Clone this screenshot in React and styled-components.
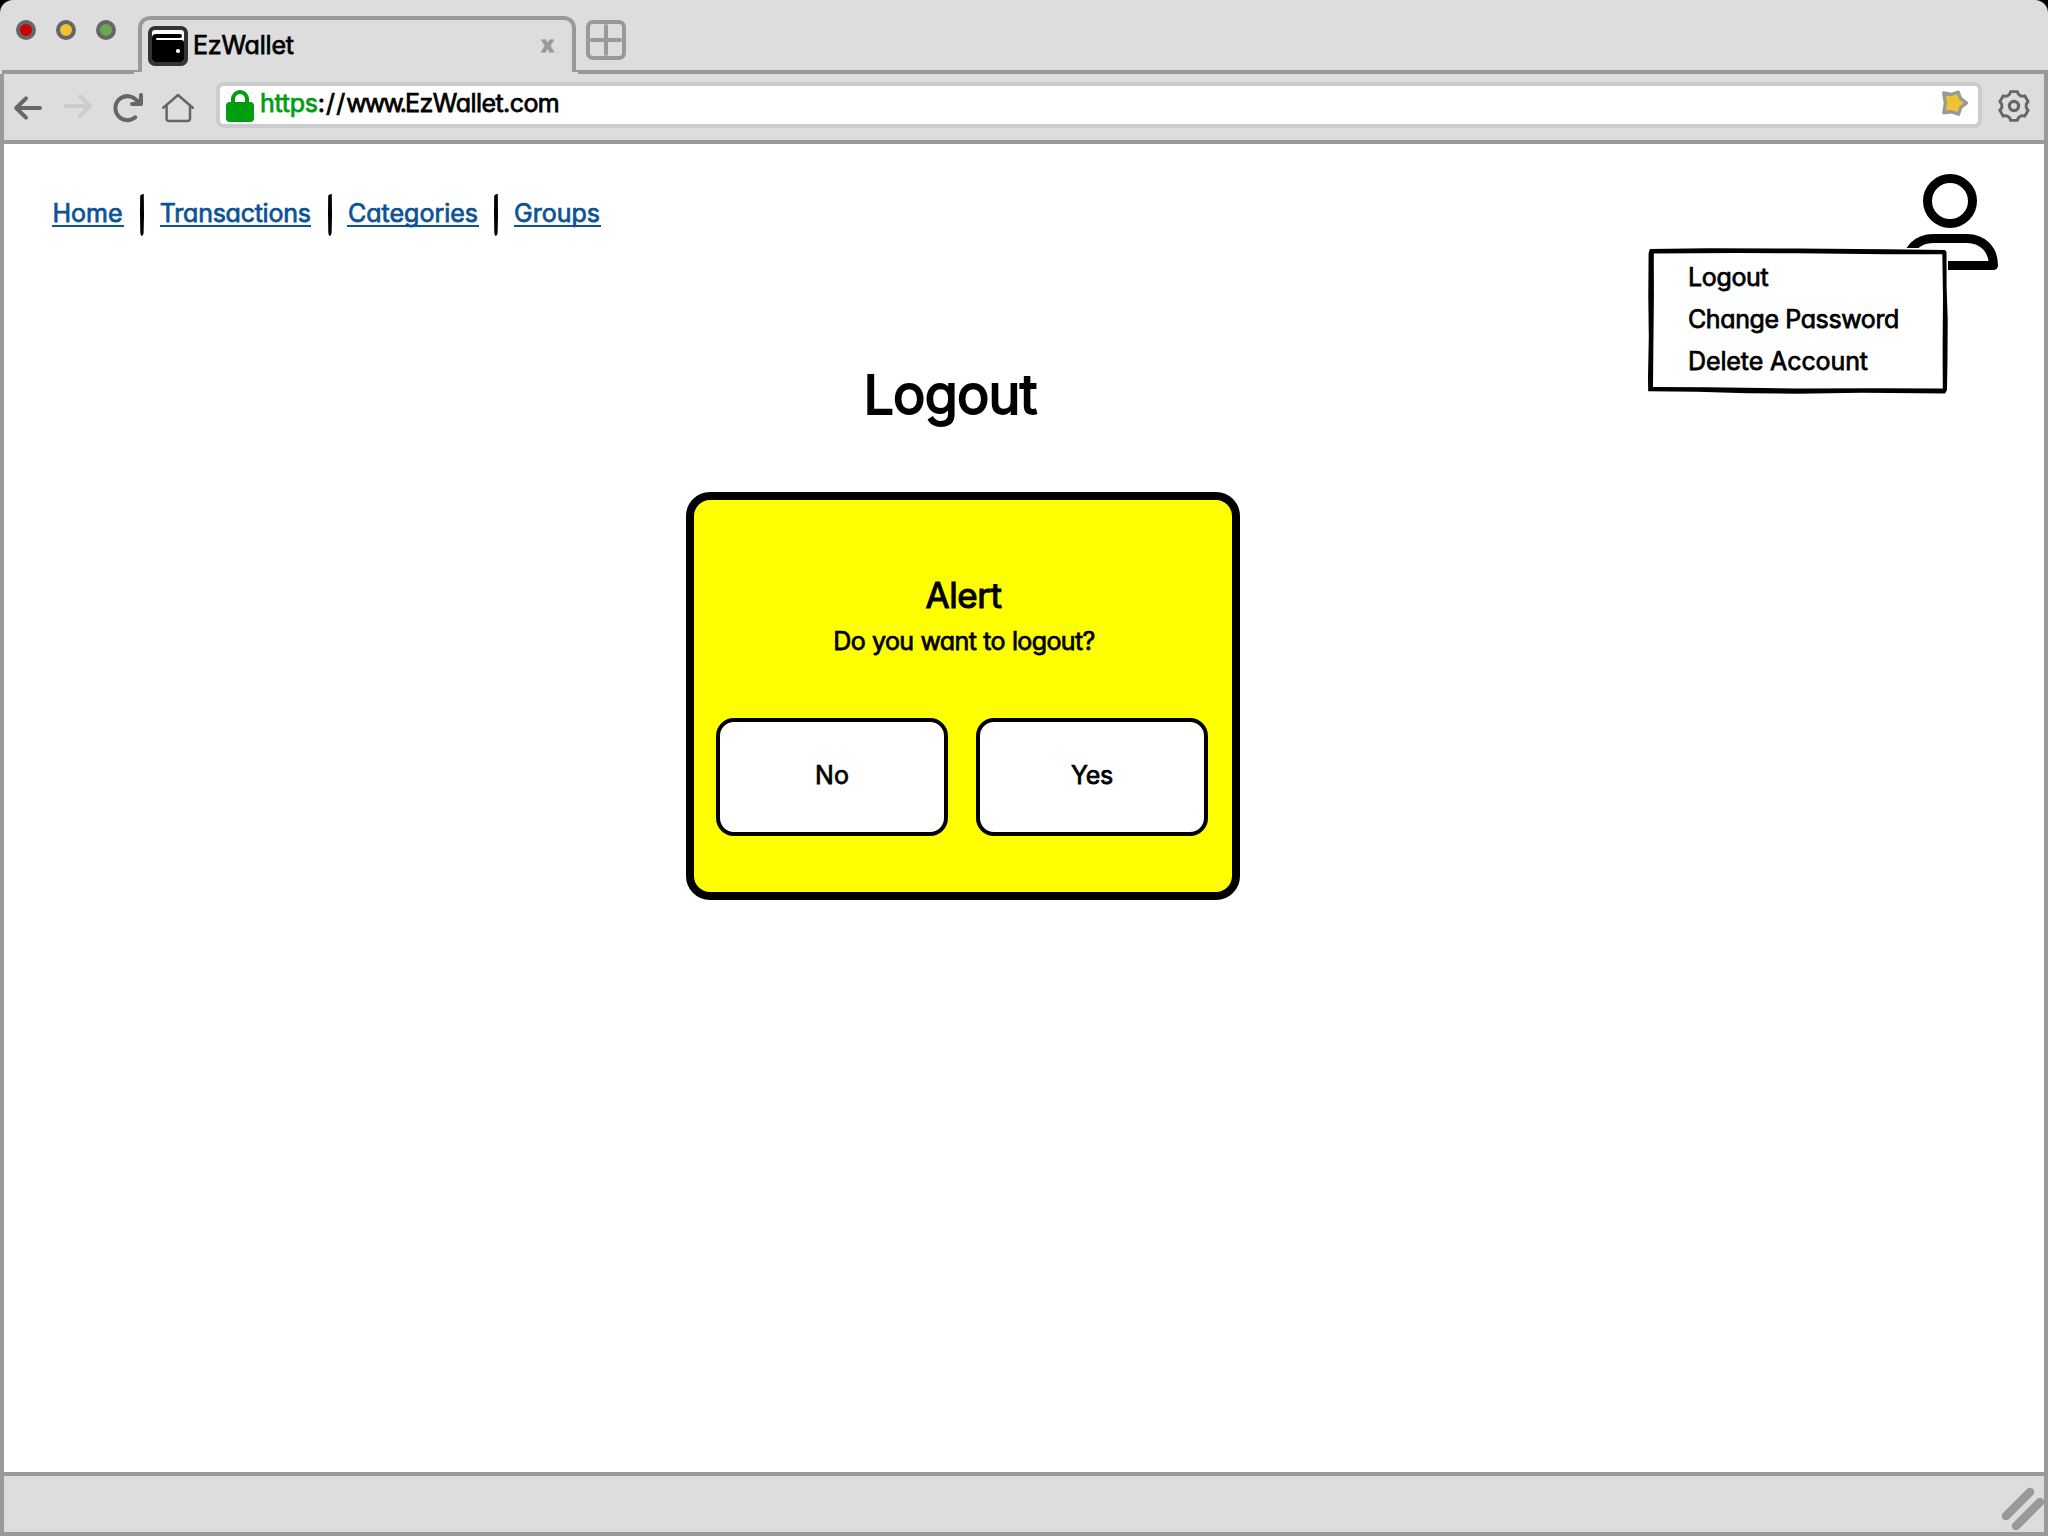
import React from "react";
import styled, { createGlobalStyle } from "styled-components";

const line = "#999999";
const chrome = "#dddddd";
const ink = "#666666";

const GlobalStyle = createGlobalStyle`
  * { box-sizing: border-box; }
  body { margin: 0; background: #000; }
`;

const Browser = styled.div`
  width: 2048px;
  height: 1536px;
  display: flex;
  flex-direction: column;
  overflow: hidden;
  background: ${chrome};
  border-radius: 13px 13px 0 0;
  font-family: Inter, "Liberation Sans", sans-serif;
  font-feature-settings: "cv11";
  font-size: 25px;
  font-weight: 400;
  color: #000;
`;

const Label = styled.span`
  display: block;
  white-space: nowrap;
  color: ${(p) => p.$color || "inherit"};
  letter-spacing: ${(p) => p.$track || 0}px;
  -webkit-text-stroke: ${(p) => p.$stroke || 0.75}px currentColor;
  stroke-linejoin: round;
`;

/* ---- tab strip ---- */

const TabStrip = styled.header`
  display: flex;
  height: 74px;
  flex: none;
`;

const WindowControls = styled.div`
  display: flex;
  gap: 20px;
  width: 132px;
  margin: 0 4px 0 2px;
  padding: 20px 0 0 14px;
  border-bottom: 4px solid ${line};
`;

const Dot = styled.i`
  width: 20px;
  height: 20px;
  border-radius: 50%;
  border: 4px solid ${ink};
  background: ${(p) => p.$color};
`;

const Tab = styled.div`
  position: relative;
  display: flex;
  width: 438px;
  height: 56px;
  margin-top: 16px;
  padding: 6px 18px 0 6px;
  border: 4px solid ${line};
  border-bottom: 0;
  border-radius: 12px 12px 0 0;
  line-height: 38px;
  &::before, &::after {
    content: "";
    position: absolute;
    bottom: 0;
    height: 2px;
    background: ${line};
  }
  &::before { left: -8px; width: 4px; }
  &::after { right: -6px; width: 2px; }
`;

const TabTitle = styled(Label)`
  flex: 1;
  margin-left: 5px;
`;

const CloseMark = styled.span`
  color: ${line};
  font-size: 22px;
  font-weight: 800;
  margin-top: -1px;
  -webkit-text-stroke: 0.8px currentColor;
`;

const StripRest = styled.div`
  flex: 1;
  margin-left: 2px;
  padding: 20px 0 0 8px;
  border-bottom: 4px solid ${line};
`;

/* ---- address toolbar ---- */

const Frame = styled.div`
  flex: 1;
  display: flex;
  flex-direction: column;
  border: 4px solid ${line};
  border-top: 0;
`;

const Toolbar = styled.div`
  display: flex;
  height: 70px;
  padding: 8px 12px 0 8px;
  border-bottom: 4px solid ${line};
`;

const Controls = styled.div`
  display: flex;
  gap: 18px;
  padding-top: 10px;
`;

const AddressBar = styled.div`
  display: flex;
  width: 1766px;
  height: 46px;
  margin-left: 22px;
  padding: 4px 10px 0 6px;
  border: 4px solid #cccccc;
  border-radius: 8px;
  background: #fff;
`;

const Address = styled.div`
  flex: 1;
  display: flex;
  margin-left: 6px;
  line-height: 27px;
`;

const Settings = styled.div`
  margin: 8px 0 0 14px;
`;

const Icon = styled.svg`
  display: block;
  flex: none;
  fill: none;
  stroke: ${ink};
  stroke-linecap: round;
  stroke-linejoin: round;
`;

/* ---- page ---- */

const Page = styled.div`
  flex: 1;
  background: #fff;
`;

const PageHeader = styled.div`
  display: flex;
  justify-content: space-between;
  height: 218px;
  padding: 30px 46px 0 47.5px;
`;

const Nav = styled.nav`
  display: flex;
  gap: 16px;
  padding-top: 20px;
`;

const NavLink = styled.a`
  display: flex;
  justify-content: center;
  width: ${(p) => p.$width}px;
  height: 27px;
  margin-top: 6px;
  line-height: 27px;
  color: #0b5394;
  border-bottom: 2px solid #0b5394;
`;

const Divider = styled.svg`
  display: block;
  width: 4px;
  height: 42px;
  margin: 0 ${(p) => p.$after || 0}px 0 ${(p) => p.$before || 0}px;
`;

const Account = styled.div`
  position: relative;
  width: 96px;
  height: 96px;
`;

const Menu = styled.div`
  position: absolute;
  top: 73px;
  right: 49px;
  width: 302px;
  height: 148px;
  padding: 9px 0 0 41px;
  line-height: 42px;
`;

const MenuFrame = styled.svg`
  position: absolute;
  left: 0;
  top: 0;
`;

const MenuItem = styled.div`
  position: relative;
`;

const Main = styled.main`
  padding-left: 682px;
`;

const Title = styled.h1`
  display: flex;
  justify-content: center;
  width: 528px;
  margin: 0 0 64px;
  font-size: 54px;
  font-weight: 400;
  line-height: 66px;
`;

const Alert = styled.section`
  display: flex;
  flex-direction: column;
  align-items: center;
  width: 554px;
  height: 408px;
  padding-top: 74px;
  border: 8px solid #000;
  border-radius: 24px;
  background: #ffff00;
`;

const AlertTitle = styled.h2`
  margin: 0 0 9px 1px;
  font-size: 35px;
  font-weight: 400;
  line-height: 42px;
`;

const Question = styled.div`
  margin-left: 2px;
  line-height: 32px;
  word-spacing: 0.5px;
`;

const Actions = styled.div`
  display: flex;
  gap: 28px;
  margin: 61px 2px 0 0;
`;

const Button = styled.button`
  display: flex;
  align-items: center;
  justify-content: center;
  width: 232px;
  height: 118px;
  padding: 0 0 5px;
  border: 4px solid #000;
  border-radius: 18px;
  background: #fff;
  color: #000;
  font: inherit;
  font-feature-settings: inherit;
`;

const StatusBar = styled.footer`
  display: flex;
  justify-content: flex-end;
  height: 60px;
  border-top: 4px solid ${line};
  background: ${chrome};
`;

const gearPoints = [0, 1, 2, 3, 4, 5]
  .flatMap((k) =>
    [[-26, 12.2], [-19, 12.8], [-13.5, 14.8], [13.5, 14.8], [19, 12.8], [26, 12.2]].map(([a, r]) => {
      const t = ((k * 60 - 90 + a) * Math.PI) / 180;
      return `${(16 + r * Math.cos(t)).toFixed(2)},${(16 + r * Math.sin(t)).toFixed(2)}`;
    })
  )
  .join(" ");

const WalletIcon = () => (
  <Icon width="40" height="40" viewBox="148 26 40 40">
    <rect x="150" y="28" width="36" height="36" rx="4" fill={chrome} stroke="none" />
    <path d="M152 40V33q0-3 3-3h26q3 0 3 3v7z" fill="#fff" stroke="none" />
    <path d="M152 59V38q0-4 4-4h24q2 0 2 2t-2 2h-23q-1 0-1 1t1 1h24q3 0 3 3v16q0 3-3 3h-26q-3 0-3-3z" fill="#000" stroke="none" />
    <circle cx="178" cy="51" r="2.1" fill="#fff" stroke="none" />
    <rect x="150" y="28" width="36" height="36" rx="5" stroke="#333" strokeWidth="4" />
  </Icon>
);

const NewTabIcon = () => (
  <Icon width="40" height="40" viewBox="0 0 40 40">
    <rect x="2" y="2" width="36" height="36" rx="5" stroke={line} strokeWidth="4" />
    <path d="M6 20H34M20 6V34" stroke={line} strokeWidth="4" />
  </Icon>
);

const Separator = ({ before, after }) => (
  <Divider viewBox="0 0 4 42" $before={before} $after={after}>
    <path d="M0.2 2Q0.4 0.4 3.8 0L4 22L3.6 39Q3.2 42 1.8 42Q0.4 41.6 0.3 38L0 20Z" />
  </Divider>
);

export default function App() {
  return (
    <Browser>
      <GlobalStyle />
      <TabStrip>
        <WindowControls>
          <Dot $color="#cc0000" />
          <Dot $color="#f1c232" />
          <Dot $color="#6aa84f" />
        </WindowControls>
        <Tab>
          <WalletIcon />
          <TabTitle $track={-0.2}>EzWallet</TabTitle>
          <CloseMark>x</CloseMark>
        </Tab>
        <StripRest>
          <NewTabIcon />
        </StripRest>
      </TabStrip>
      <Frame>
        <Toolbar>
          <Controls>
            <Icon width="32" height="32" viewBox="12 92 32 32" strokeWidth="4">
              <path d="M40 108H16.500M26 98.300L16.200 108L26 117.600" />
            </Icon>
            <Icon width="32" height="32" viewBox="62 92 32 32" strokeWidth="4">
              <path d="M66 106H89.500M80 96.300L89.800 106L80 115.800" stroke="#cccccc" />
            </Icon>
            <Icon width="32" height="32" viewBox="112 92 32 32" strokeWidth="4">
              <path d="M135.200 117.300A12 12 0 1 1 138 102.500" />
              <path d="M141 95V104H132" />
              <path d="M141 98V104H135Z" fill={ink} strokeWidth="2" />
            </Icon>
            <Icon width="32" height="32" viewBox="162 92 32 32" strokeWidth="2.500">
              <path d="M163.300 107.700L178 95L192.700 107.700M166.600 105V118.500Q166.600 121 169 121H187.500Q190 121 190 118.500V105" />
            </Icon>
          </Controls>
          <AddressBar>
            <Icon width="28" height="32" viewBox="226 90 28 32">
              <rect x="226" y="102" width="28" height="20" rx="4" fill="#009e0f" stroke="none" />
              <path d="M233 103V99a7 7 0 0 1 14 0V103" stroke="#009e0f" strokeWidth="4" />
            </Icon>
            <Address>
              <Label $color="#009e0f" $track={-0.25}>https</Label>
              <Label $track={1.1}>://</Label>
              <Label $track={-2}>www.</Label>
              <Label $track={-0.55}>EzWallet.com</Label>
            </Address>
            <Icon width="28" height="28" viewBox="1940 90 28 28" strokeWidth="3.400">
              <path
                d="M1943.700 93L1951 94.500L1958.200 92.200L1960.500 98.300L1966.500 103L1960.700 107.500L1958.500 114.200L1951 111.700L1943.800 112.800L1945.400 103Z"
                fill="#f1c232"
                stroke={line}
              />
            </Icon>
          </AddressBar>
          <Settings>
            <Icon width="36" height="32" viewBox="-2 0 36 32" strokeWidth="2.900">
              <polygon points={gearPoints} />
              <circle cx="16" cy="16" r="4.600" strokeWidth="3.200" />
            </Icon>
          </Settings>
        </Toolbar>
        <Page>
          <PageHeader>
            <Nav>
              <NavLink $width={72}><Label $track={0}>Home</Label></NavLink>
              <Separator />
              <NavLink $width={151.5}><Label $track={-0.25}>Transactions</Label></NavLink>
              <Separator before={1} after={-1} />
              <NavLink $width={132}><Label $track={0}>Categories</Label></NavLink>
              <Separator before={-1} after={-0.5} />
              <NavLink $width={87}><Label $track={0}>Groups</Label></NavLink>
            </Nav>
            <Account>
              <svg width="96" height="96" viewBox="0 0 96 96" fill="none" stroke="#000" strokeWidth="9" strokeLinejoin="round">
                <circle cx="48" cy="27" r="22.500" />
                <path d="M4.500 91.500C4.500 75 16 64.500 31 64.500H65C80 64.500 91.500 75 91.500 91.500Z" />
              </svg>
              <Menu>
                <MenuFrame width="302" height="148" viewBox="0 0 302 148">
                  <path d="M0 1H301V148H0Z" fill="#fff" />
                  <path
                    fillRule="evenodd"
                    d="M3 2L60 1.200L150 1.500L240 2.300L298 3L299.500 5L299.600 40L300.700 72L300.500 110L300 143L298 146.500L215 145.800L150 146.700L100 146.200L50 144.800L1.200 144.200L1 130L1.800 90L1.300 50L1.600 6Z M6.800 6.500L6.900 50L6.400 95L6 140L60 140.200L150 141.600L230 141.200L295.800 141.400L295.600 100L296 50L295.300 7.300L240 7.300L150 6.300L90 6Z"
                  />
                </MenuFrame>
                <MenuItem><Label $track={-0.35}>Logout</Label></MenuItem>
                <MenuItem><Label $track={-0.4}>Change Password</Label></MenuItem>
                <MenuItem><Label $track={-0.1}>Delete Account</Label></MenuItem>
              </Menu>
            </Account>
          </PageHeader>
          <Main>
            <Title><Label $track={-0.8} $stroke={1.8}>Logout</Label></Title>
            <Alert>
              <AlertTitle><Label $track={-0.4} $stroke={1.1}>Alert</Label></AlertTitle>
              <Question><Label $track={-0.6}>Do you want to logout?</Label></Question>
              <Actions>
                <Button><Label>No</Label></Button>
                <Button><Label $track={-0.3}>Yes</Label></Button>
              </Actions>
            </Alert>
          </Main>
        </Page>
        <StatusBar>
          <Icon width="44" height="56" viewBox="2000 1476 44 56" strokeWidth="8.500">
            <path d="M2006 1516L2030 1492M2016 1526L2040 1502" stroke={line} />
          </Icon>
        </StatusBar>
      </Frame>
    </Browser>
  );
}
